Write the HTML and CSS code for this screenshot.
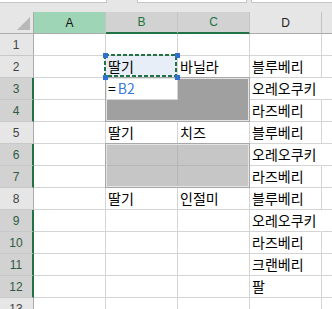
FILE: index.html
```html
<!DOCTYPE html>
<html lang="ko">
<head>
<meta charset="utf-8">
<link rel="stylesheet" href="styles.css">
</head>
<body>
<div class="toolbar">
  <div class="box box1"></div>
  <div class="box box2"></div>
  <div class="box box3"></div>
</div>
<div class="sheet">
  <div class="corner"><svg width="13" height="13" viewBox="0 0 13 13"><polygon points="13,0 13,13 0,13" fill="#b8b8b8"/></svg></div>
  <div class="ch cha">A</div>
  <div class="ch chs">B</div>
  <div class="ch chs">C</div>
  <div class="ch">D</div>
  <div class="ch che"></div>

  <div class="rh">1</div><div class="c"></div><div class="c"></div><div class="c"></div><div class="c"></div><div class="c e"></div>
  <div class="rh">2</div><div class="c"></div><div class="c active">딸기</div><div class="c">바닐라</div><div class="c">블루베리</div><div class="c e"></div>
  <div class="rh hl">3</div><div class="c"></div><div class="c">=<span class="ref">B2</span></div><div class="c dk"></div><div class="c spill">오레오쿠키</div><div class="c e"></div>
  <div class="rh hl">4</div><div class="c"></div><div class="c dk"></div><div class="c dk"></div><div class="c">라즈베리</div><div class="c e"></div>
  <div class="rh">5</div><div class="c"></div><div class="c">딸기</div><div class="c">치즈</div><div class="c">블루베리</div><div class="c e"></div>
  <div class="rh hl">6</div><div class="c"></div><div class="c lg"></div><div class="c lg"></div><div class="c spill">오레오쿠키</div><div class="c e"></div>
  <div class="rh hl">7</div><div class="c"></div><div class="c lg"></div><div class="c lg"></div><div class="c">라즈베리</div><div class="c e"></div>
  <div class="rh">8</div><div class="c"></div><div class="c">딸기</div><div class="c">인절미</div><div class="c">블루베리</div><div class="c e"></div>
  <div class="rh hl">9</div><div class="c"></div><div class="c"></div><div class="c"></div><div class="c spill">오레오쿠키</div><div class="c e"></div>
  <div class="rh hl">10</div><div class="c"></div><div class="c"></div><div class="c"></div><div class="c">라즈베리</div><div class="c e"></div>
  <div class="rh hl">11</div><div class="c"></div><div class="c"></div><div class="c"></div><div class="c">크랜베리</div><div class="c e"></div>
  <div class="rh hl">12</div><div class="c"></div><div class="c"></div><div class="c"></div><div class="c">팔</div><div class="c e"></div>
  <div class="rh">13</div><div class="c"></div><div class="c"></div><div class="c"></div><div class="c"></div><div class="c e"></div>

  <div class="range range-dark"></div>
  <div class="range range-light"></div>
  <svg class="marquee" width="73" height="23" viewBox="0 0 73 23"><rect x="1" y="1" width="71" height="21" fill="none" stroke="#217346" stroke-width="2" stroke-dasharray="4 2"/></svg>
  <div class="handle h-tl"></div>
  <div class="handle h-tr"></div>
  <div class="handle h-bl"></div>
  <div class="handle h-br"></div>
</div>
</body>
</html>
```
FILE: styles.css
```css
html, body {
  margin: 0;
  padding: 0;
  background: #ffffff;
  overflow: hidden;
  width: 332px;
  height: 309px;
}

.toolbar {
  height: 12px;
  background: #e6e6e6;
  display: flex;
  align-items: flex-start;
}

.box {
  height: 2px;
  background: #ffffff;
  border: 1px solid #c6c6c6;
  border-top: none;
}
.box1 { width: 106px; border-left: none; }
.box2 { width: 108px; margin-left: 30px; }
.box3 { flex: 1; margin-left: 4px; border-right: none; }

.sheet {
  position: relative;
  display: grid;
  grid-template-columns: 34px 72px 72px 72px 72px 1fr;
  grid-auto-rows: 22px;
}

.sheet > div {
  box-sizing: border-box;
}

.corner {
  background: #e6e6e6;
  border-right: 1px solid #ababab;
  border-bottom: 1px solid #ababab;
  display: flex;
  justify-content: flex-end;
  align-items: flex-end;
  padding: 0 3px 3px 0;
}
.corner svg { display: block; }

.ch {
  background: #e6e6e6;
  border-right: 1px solid #c4c4c4;
  border-bottom: 1px solid #ababab;
  font-family: "Liberation Sans", Arial, sans-serif;
  font-size: 12px;
  color: #222;
  display: flex;
  align-items: center;
  justify-content: center;
}
.cha { background: #9fd5b7; color: #111; }
.chs {
  background: #d2d2d2;
  border-bottom: 2px solid #217346;
  color: #217346;
}
.che { border-right: none; }

.rh {
  background: #e6e6e6;
  border-right: 1px solid #ababab;
  border-bottom: 1px solid #c8c8c8;
  font-family: "Liberation Sans", Arial, sans-serif;
  font-size: 12px;
  color: #444;
  display: flex;
  align-items: center;
  justify-content: center;
  padding-right: 1px;
}
.rh.hl {
  background: #d2d2d2;
  border-right: 2px solid #217346;
  color: #2e5c43;
  padding-right: 0;
}

.c {
  border-right: 1px solid #d4d4d4;
  border-bottom: 1px solid #d4d4d4;
  font-family: "Noto Sans CJK KR", "Noto Sans", sans-serif;
  font-size: 14px;
  line-height: 21px;
  color: #000;
  padding-left: 2px;
  white-space: nowrap;
}
.c.e { border-right: none; }
.c.spill { border-right-color: transparent; }
.c.active { background: #e8eef8; }
.c.dk { background: #a0a0a0; border-color: #a0a0a0; }
.c.lg { background: #c6c6c6; border-color: #b6b6b6; }
.ref { color: #3b7bdc; margin-left: 2px; }

.range {
  position: absolute;
  left: 105px;
  width: 145px;
  height: 45px;
  box-sizing: border-box;
  border: 1px solid #a8a8a8;
  box-shadow: inset 0 0 0 1px #e4e4e4;
  pointer-events: none;
}
.range-dark { top: 65px; }
.range-light { top: 131px; }

.marquee {
  position: absolute;
  left: 104px;
  top: 42px;
  display: block;
}

.handle {
  position: absolute;
  width: 5px;
  height: 5px;
  background: #2f6fd0;
}
.h-tl { left: 103px; top: 41px; }
.h-tr { left: 175px; top: 41px; }
.h-bl { left: 103px; top: 63px; }
.h-br { left: 175px; top: 63px; }
```
